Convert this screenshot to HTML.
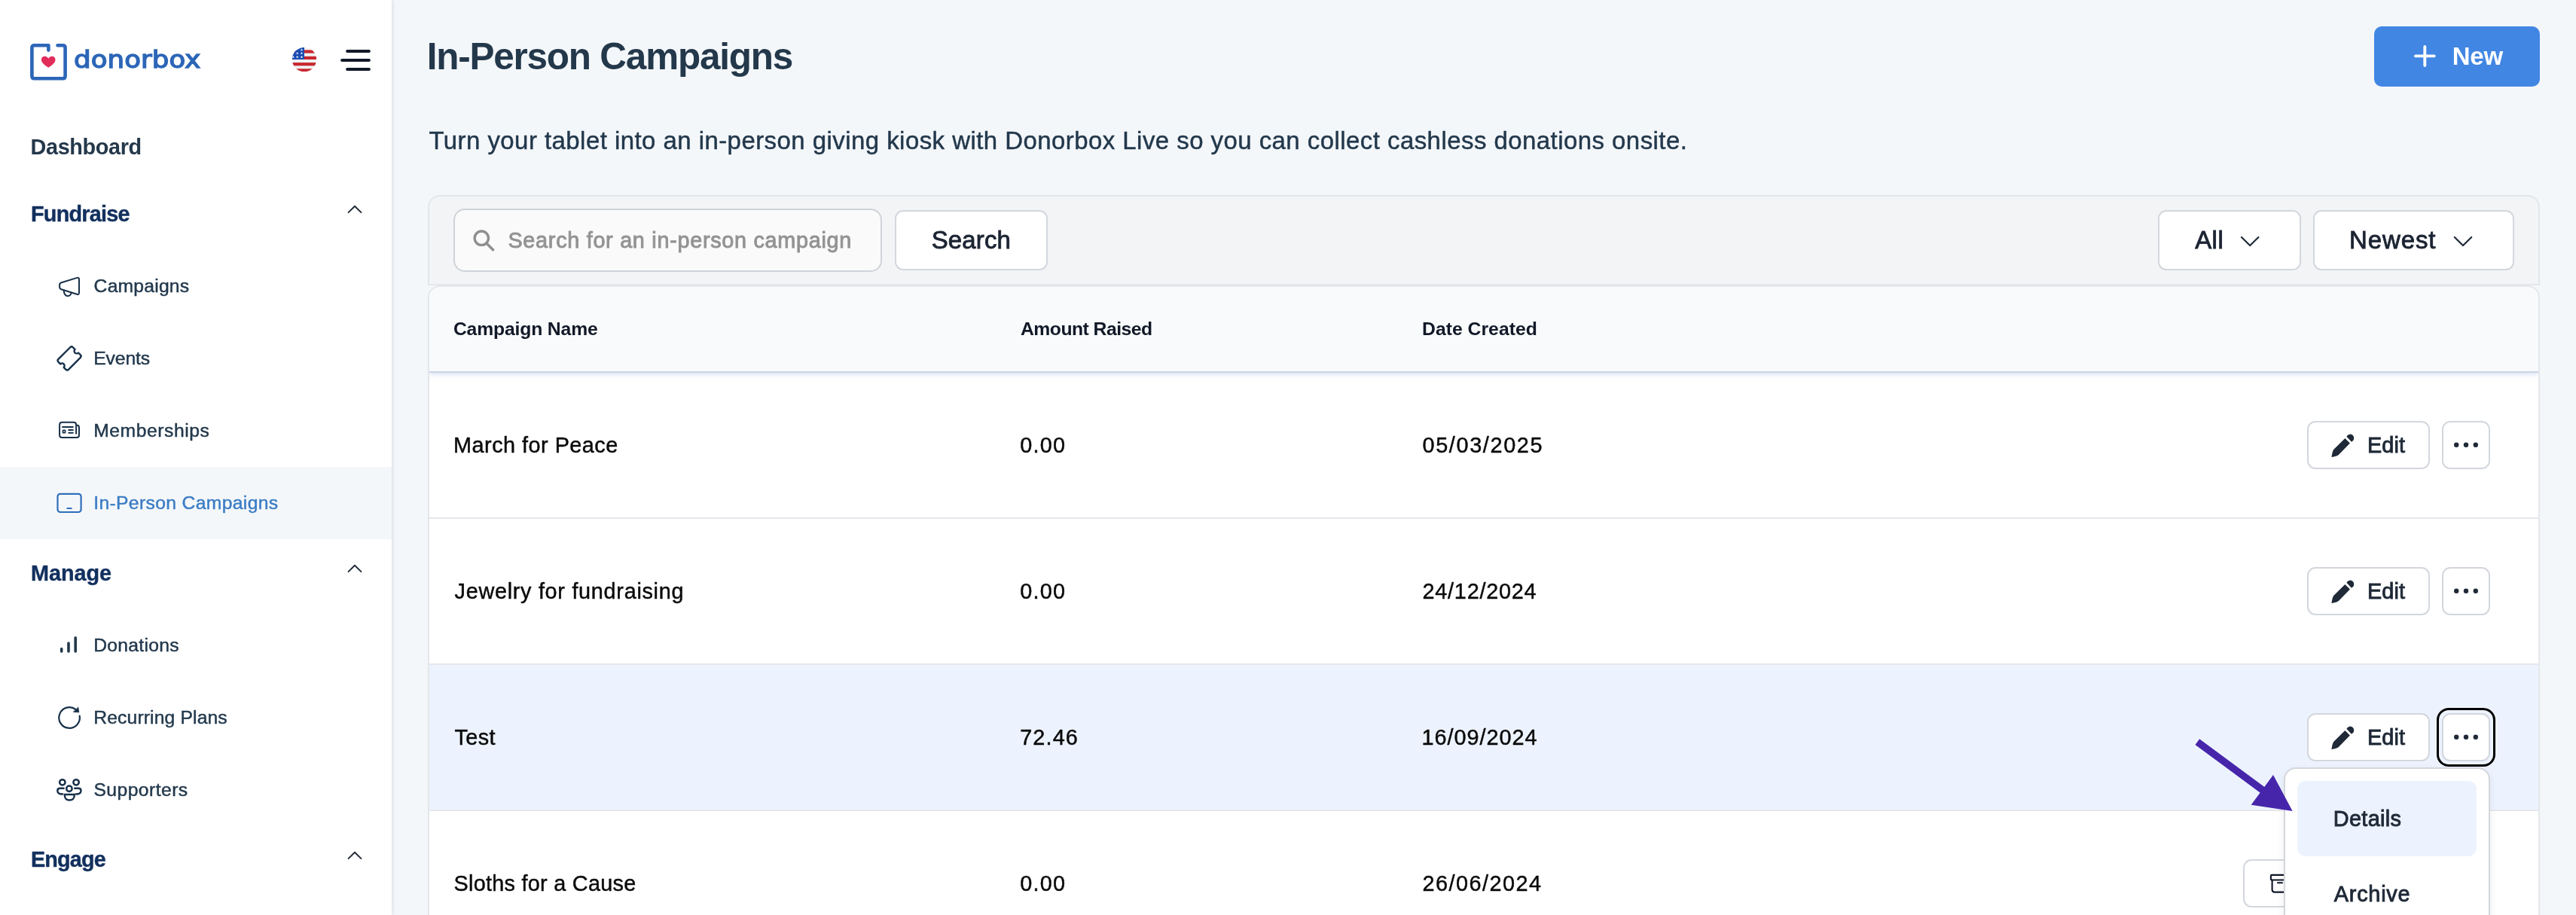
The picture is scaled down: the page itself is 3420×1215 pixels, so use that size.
<!DOCTYPE html>
<html lang="en">
<head>
<meta charset="utf-8">
<title>In-Person Campaigns</title>
<style>
*{box-sizing:border-box;margin:0;padding:0}
html,body{width:3420px;height:1215px;overflow:hidden;background:#f4f7fa;font-family:"Liberation Sans",sans-serif}
#page{position:relative;width:3420px;height:1215px;overflow:hidden;will-change:transform}
.a{position:absolute}
.t{position:absolute;white-space:nowrap;line-height:1}
#side{left:0;top:0;width:520px;height:1215px;background:#fff;box-shadow:1px 0 5px rgba(30,40,70,.13)}
#active{left:0;top:620px;width:520px;height:96px;background:#f4f7fa}
#panel{left:568px;top:259px;width:2804px;height:120px;background:#f3f4f6;border:2px solid #e4e6ea;border-radius:16px 16px 0 0}
#card{left:568px;top:379px;width:2804px;height:900px;background:#fff;border:2px solid #e4e6ea;border-radius:16px 16px 0 0;overflow:hidden}
#thead{left:0;top:0;width:2800px;height:114px;background:#f9fafb;border-bottom:2px solid #c9d4e4;box-shadow:0 2px 7px rgba(110,145,200,.28)}
.rb{left:0;width:2800px;height:2px;background:#e5e7eb}
#hl{left:0;top:502px;width:2800px;height:192px;background:#edf3fe}
.btn{position:absolute;background:#fff;border:2px solid #d3d7dd;border-radius:11px}
#inp{left:602px;top:277px;width:569px;height:84px;background:#fafafa;border:2px solid #cfd3d9;border-radius:15px}
#new{left:3152px;top:35px;width:220px;height:80px;background:#4186e3;border-radius:10px}
#ring{left:3235px;top:940px;width:78px;height:78px;border:3px solid #000;border-radius:16px}
#menu{left:3032px;top:1019px;width:274px;height:260px;background:#fff;border:2px solid #d3d6db;border-radius:16px;box-shadow:0 4px 12px rgba(0,0,0,.07)}
#mi{left:3050px;top:1037px;width:238px;height:100px;background:#edf3fe;border-radius:11px}
svg{position:absolute;overflow:visible}
</style>
</head>
<body>
<div id="page">
<!-- main panels -->
<div id="panel" class="a"></div>
<div id="card" class="a">
  <div id="hl" class="a"></div>
  <div class="a rb" style="top:306px"></div>
  <div class="a rb" style="top:500px"></div>
  <div class="a rb" style="top:694px"></div>
  <div id="thead" class="a"></div>
</div>
<div id="inp" class="a"></div>
<div class="btn" style="left:1188px;top:279px;width:203px;height:80px"></div>
<div class="btn" style="left:2865px;top:279px;width:190px;height:80px"></div>
<div class="btn" style="left:3071px;top:279px;width:267px;height:80px"></div>
<div id="new" class="a"></div>
<!-- row buttons -->
<div class="btn" style="left:3063px;top:559px;width:163px;height:64px"></div>
<div class="btn" style="left:3242px;top:559px;width:64px;height:64px"></div>
<div class="btn" style="left:3063px;top:753px;width:163px;height:64px"></div>
<div class="btn" style="left:3242px;top:753px;width:64px;height:64px"></div>
<div class="btn" style="left:3063px;top:947px;width:163px;height:64px"></div>
<div class="btn" style="left:3242px;top:947px;width:64px;height:64px"></div>
<div class="btn" style="left:2978px;top:1141px;width:200px;height:64px"></div>
<div id="ring" class="a"></div>
<!-- sidebar -->
<div id="side" class="a"></div>
<div id="active" class="a"></div>
<svg class="a" style="left:0;top:0" width="3420" height="1215" viewBox="0 0 3420 1215" fill="none" stroke-linecap="round" stroke-linejoin="round">
<!-- logo -->
<path d="M64.4 66.6V60.2H45.6Q42.4 60.2 42.4 63.4V101Q42.4 104.2 45.6 104.2H83.4Q86.6 104.2 86.6 101V63.4Q86.6 60.2 83.4 60.2H76.5" stroke="#2c66b8" stroke-width="4.6"/>
<path d="M64.3 89.7C58 86 54.9 82.5 54.9 79.3C54.9 76.5 57 74.8 59.4 74.8C61.5 74.8 63 76 64.3 77.6C65.6 76 67.1 74.8 69.2 74.8C71.6 74.8 73.5 76.5 73.5 79.3C73.5 82.5 70.6 86 64.3 89.7Z" fill="#e12d5a"/>
<!-- flag -->
<defs><clipPath id="fc"><circle cx="404" cy="79" r="16.1"/></clipPath></defs>
<g clip-path="url(#fc)">
<rect x="387" y="62" width="34" height="34" fill="#f0f1f1"/>
<rect x="387" y="66.4" width="34" height="4.2" fill="#c8262f"/>
<rect x="387" y="74.8" width="34" height="4.2" fill="#c8262f"/>
<rect x="387" y="83.1" width="34" height="4.2" fill="#c8262f"/>
<rect x="387" y="91.3" width="34" height="4.2" fill="#c8262f"/>
<rect x="387" y="62" width="17" height="17" fill="#1d4db3"/>
<g fill="#f3f4f6">
<polygon points="400.50,64.40 400.97,65.65 402.31,65.71 401.26,66.55 401.62,67.84 400.50,67.10 399.38,67.84 399.74,66.55 398.69,65.71 400.03,65.65"/><polygon points="394.70,68.90 395.17,70.15 396.51,70.21 395.46,71.05 395.82,72.34 394.70,71.60 393.58,72.34 393.94,71.05 392.89,70.21 394.23,70.15"/><polygon points="400.50,68.90 400.97,70.15 402.31,70.21 401.26,71.05 401.62,72.34 400.50,71.60 399.38,72.34 399.74,71.05 398.69,70.21 400.03,70.15"/>
<polygon points="394.70,73.70 395.17,74.95 396.51,75.01 395.46,75.85 395.82,77.14 394.70,76.40 393.58,77.14 393.94,75.85 392.89,75.01 394.23,74.95"/><polygon points="400.50,73.70 400.97,74.95 402.31,75.01 401.26,75.85 401.62,77.14 400.50,76.40 399.38,77.14 399.74,75.85 398.69,75.01 400.03,74.95"/><polygon points="389.20,73.70 389.67,74.95 391.01,75.01 389.96,75.85 390.32,77.14 389.20,76.40 388.08,77.14 388.44,75.85 387.39,75.01 388.73,74.95"/>
</g>
</g>
<!-- hamburger -->
<g stroke="#111827" stroke-width="4"><path d="M461.1 68H489.9"/><path d="M454.1 80H489.9"/><path d="M461.1 92H489.9"/></g>
<!-- chevrons up -->
<g stroke="#1f2937" stroke-width="1.9" stroke-linecap="butt"><path d="M462 282.6L471 273.8L480 282.6"/><path d="M462 759.6L471 750.8L480 759.6"/><path d="M462 1140.6L471 1131.8L480 1140.6"/></g>
<!-- megaphone -->
<g stroke="#17304a" stroke-width="2" transform="translate(66 350)">
<path d="M15.5 25.3L36.3 18.9Q39 18.2 39 21V38.8Q39 41.5 36.3 40.8L15.5 34.2Q13.1 33.4 13.1 31V28.4Q13.1 26.1 15.5 25.3Z"/>
<path d="M18.7 35.4C18.7 40 21 43 23.6 43C26 43 28 41.5 28.9 38.7"/>
</g>
<!-- ticket -->
<g stroke="#17304a" stroke-width="2.4" transform="translate(92.1 475.9) rotate(-45)">
<path d="M-11.1 -9.6H11.1Q13.7 -9.6 13.7 -7V-3.2A3.2 3.2 0 0 0 13.7 3.2V7Q13.7 9.6 11.1 9.6H-11.1Q-13.7 9.6 -13.7 7V3.2A3.2 3.2 0 0 0 -13.7 -3.2V-7Q-13.7 -9.6 -11.1 -9.6Z"/>
</g>
<!-- memberships -->
<g stroke="#17304a" stroke-width="2" transform="translate(66 542)">
<path d="M35.1 33.8V22Q35.1 18.7 31.8 18.7H16.4Q13.1 18.7 13.1 22V35.7Q13.1 39 16.4 39H35.7Q39 39 39 35.7V25.9Q39 22.6 35.7 22.6H35.1"/>
<path d="M17 24.9H30.8M25.2 28.9H30.8M25.2 32.8H30.8"/>
<rect x="17.5" y="29.3" width="3.1" height="3.4" rx="0.5" stroke-width="1.7"/>
</g>
<!-- tablet (active) -->
<g stroke="#2f6fba" stroke-width="2.2" transform="translate(66 638)">
<rect x="10.5" y="17.8" width="31.1" height="24.2" rx="3.4"/>
<path d="M23.4 37H28.7"/>
</g>
<!-- bars -->
<g stroke="#24384b" stroke-width="3.6" transform="translate(66 826)">
<path d="M15.7 35.6V38.9M25 28V38.9M34.2 20.8V38.9"/>
</g>
<!-- recurring -->
<g transform="translate(66 922)">
<path d="M39.7 28.6A13.8 13.8 0 1 1 34.6 20.1" stroke="#17304a" stroke-width="2.2"/>
<path d="M37.9 17.2L38.9 23.9L31.3 23.4Z" fill="#17304a" stroke="#17304a" stroke-width="0.6"/>
</g>
<!-- supporters -->
<g stroke="#17304a" stroke-width="2.45" transform="translate(66 1018)">
<circle cx="16.85" cy="20.85" r="3.7"/><circle cx="35.1" cy="20.85" r="3.7"/><circle cx="25.9" cy="29.2" r="3.7"/>
<path d="M19.9 37H32.7V38.6C32.7 42.4 30 44.5 26.3 44.5C22.6 44.5 19.9 42.4 19.9 38.6Z"/>
<path d="M18.6 28.8H13.6Q10.3 28.8 10.3 32C10.3 35 13 36.9 17.3 36.4"/>
<path d="M33.2 28.8H38.2Q41.5 28.8 41.5 32C41.5 35 38.8 36.9 34.5 36.4"/>
</g>
<!-- search icon -->
<g stroke="#8f8f8f" stroke-width="3.4" stroke-linecap="butt">
<circle cx="639.3" cy="316.2" r="9.2"/><path d="M645.8 323L654.4 331.6" stroke-linecap="square"/>
</g>
<!-- plus -->
<g stroke="#fff" stroke-width="3.9"><path d="M3219.3 62V87M3207 74.4H3231.7"/></g>
<!-- chevrons down -->
<g stroke="#1f2937" stroke-width="2.2"><path d="M2976 315L2987.2 326L2998.4 315"/><path d="M3258.8 315L3270 326L3281.2 315"/></g>
<!-- pencils + dots -->
<g>
<g fill="#1f2937">
<path d="M3113.35 582.1L3119.9 588.6L3104.8 603.9Q3103 605.3 3100.2 605.9L3095.9 607Q3095.3 607 3095.5 606.3L3096.4 601.7Q3096.9 598.9 3098.4 596.8Z"/>
<path d="M3115.4 579.7L3121.9 586.7A5.2 5.2 0 1 0 3115.4 579.7Z"/>
<circle cx="3261.2" cy="590.8" r="3.2"/><circle cx="3274" cy="590.8" r="3.2"/><circle cx="3286.8" cy="590.8" r="3.2"/>
</g>
</g>
<g transform="translate(0 194)">
<g fill="#1f2937">
<path d="M3113.35 582.1L3119.9 588.6L3104.8 603.9Q3103 605.3 3100.2 605.9L3095.9 607Q3095.3 607 3095.5 606.3L3096.4 601.7Q3096.9 598.9 3098.4 596.8Z"/>
<path d="M3115.4 579.7L3121.9 586.7A5.2 5.2 0 1 0 3115.4 579.7Z"/>
<circle cx="3261.2" cy="590.8" r="3.2"/><circle cx="3274" cy="590.8" r="3.2"/><circle cx="3286.8" cy="590.8" r="3.2"/>
</g>
</g>
<g transform="translate(0 388)">
<g fill="#1f2937">
<path d="M3113.35 582.1L3119.9 588.6L3104.8 603.9Q3103 605.3 3100.2 605.9L3095.9 607Q3095.3 607 3095.5 606.3L3096.4 601.7Q3096.9 598.9 3098.4 596.8Z"/>
<path d="M3115.4 579.7L3121.9 586.7A5.2 5.2 0 1 0 3115.4 579.7Z"/>
<circle cx="3261.2" cy="590.8" r="3.2"/><circle cx="3274" cy="590.8" r="3.2"/><circle cx="3286.8" cy="590.8" r="3.2"/>
</g>
</g>
<!-- archive icon row 4 -->
<g stroke="#111827" stroke-width="2.1">
<rect x="3014.9" y="1161.9" width="27" height="6.6" rx="1"/>
<path d="M3016.6 1168.6V1181.2Q3016.6 1184.6 3020 1184.6H3036.4Q3039.8 1184.6 3039.8 1181.2V1168.6M3024 1172.2H3030"/>
</g>
</svg>

<div id="menu" class="a"></div>
<div id="mi" class="a"></div>
<svg class="a" style="left:0;top:0" width="3420" height="1215" viewBox="0 0 3420 1215">
<path d="M2917.3 985.1L3006 1050.6" stroke="#4725ab" stroke-width="9.5" fill="none"/>
<path d="M2988.7 1068.7L3018 1029.1L3043.6 1077.1Z" fill="#4725ab"/>
</svg>

<span class="t" style="left:97.56px;top:64.34px;font-size:31.5px;font-weight:400;color:#2c66b8;letter-spacing:0.087px;-webkit-text-stroke:1.4px currentColor;font-family:'DejaVu Sans',sans-serif;transform:scaleX(1.13);transform-origin:0 0;">donorbox</span>
<span class="t" style="left:40.50px;top:180.59px;font-size:28.84px;font-weight:700;color:#24384b;letter-spacing:-0.358px;">Dashboard</span>
<span class="t" style="left:41.00px;top:269.59px;font-size:28.84px;font-weight:700;color:#12305e;letter-spacing:-0.791px;-webkit-text-stroke:0.4px currentColor;">Fundraise</span>
<span class="t" style="left:41.00px;top:746.59px;font-size:28.84px;font-weight:700;color:#12305e;letter-spacing:-0.040px;-webkit-text-stroke:0.4px currentColor;">Manage</span>
<span class="t" style="left:41.00px;top:1126.59px;font-size:28.84px;font-weight:700;color:#12305e;letter-spacing:-0.858px;-webkit-text-stroke:0.4px currentColor;">Engage</span>
<span class="t" style="left:124.62px;top:368.07px;font-size:24.72px;font-weight:400;color:#22384c;letter-spacing:0.185px;-webkit-text-stroke:0.45px currentColor;">Campaigns</span>
<span class="t" style="left:124.22px;top:464.07px;font-size:24.72px;font-weight:400;color:#22384c;letter-spacing:-0.132px;-webkit-text-stroke:0.45px currentColor;">Events</span>
<span class="t" style="left:124.22px;top:560.07px;font-size:24.72px;font-weight:400;color:#22384c;letter-spacing:0.525px;-webkit-text-stroke:0.45px currentColor;">Memberships</span>
<span class="t" style="left:124.22px;top:656.07px;font-size:24.72px;font-weight:400;color:#3b7cc4;letter-spacing:0.325px;-webkit-text-stroke:0.45px currentColor;">In-Person Campaigns</span>
<span class="t" style="left:124.22px;top:845.07px;font-size:24.72px;font-weight:400;color:#22384c;letter-spacing:0.250px;-webkit-text-stroke:0.45px currentColor;">Donations</span>
<span class="t" style="left:124.22px;top:941.07px;font-size:24.72px;font-weight:400;color:#22384c;letter-spacing:0.118px;-webkit-text-stroke:0.45px currentColor;">Recurring Plans</span>
<span class="t" style="left:124.42px;top:1037.07px;font-size:24.72px;font-weight:400;color:#22384c;letter-spacing:0.433px;-webkit-text-stroke:0.45px currentColor;">Supporters</span>
<span class="t" style="left:566.70px;top:50.15px;font-size:49.44px;font-weight:700;color:#24384b;letter-spacing:-1.206px;">In-Person Campaigns</span>
<span class="t" style="left:569.43px;top:171.10px;font-size:32.96px;font-weight:400;color:#22384c;letter-spacing:0.456px;-webkit-text-stroke:0.45px currentColor;">Turn your tablet into an in-person giving kiosk with Donorbox Live so you can collect cashless donations onsite.</span>
<span class="t" style="left:674.45px;top:304.59px;font-size:28.84px;font-weight:400;color:#939393;letter-spacing:0.699px;-webkit-text-stroke:0.9px currentColor;">Search for an in-person campaign</span>
<span class="t" style="left:1236.65px;top:303.10px;font-size:32.96px;font-weight:400;color:#1c2433;letter-spacing:0.163px;-webkit-text-stroke:0.9px currentColor;">Search</span>
<span class="t" style="left:2914.15px;top:303.10px;font-size:32.96px;font-weight:400;color:#1c2433;letter-spacing:0.500px;-webkit-text-stroke:0.9px currentColor;">All</span>
<span class="t" style="left:3118.95px;top:303.10px;font-size:32.96px;font-weight:400;color:#1c2433;letter-spacing:0.935px;-webkit-text-stroke:0.9px currentColor;">Newest</span>
<span class="t" style="left:3255.70px;top:59.10px;font-size:32.96px;font-weight:700;color:#ffffff;letter-spacing:-0.212px;">New</span>
<span class="t" style="left:601.90px;top:425.07px;font-size:24.72px;font-weight:700;color:#111827;letter-spacing:-0.153px;">Campaign Name</span>
<span class="t" style="left:1355.00px;top:425.07px;font-size:24.72px;font-weight:700;color:#111827;letter-spacing:-0.516px;">Amount Raised</span>
<span class="t" style="left:1888.00px;top:425.07px;font-size:24.72px;font-weight:700;color:#111827;letter-spacing:0.028px;">Date Created</span>
<span class="t" style="left:602.12px;top:576.59px;font-size:28.84px;font-weight:400;color:#0a0a0a;letter-spacing:0.478px;-webkit-text-stroke:0.45px currentColor;">March for Peace</span>
<span class="t" style="left:1354.22px;top:576.59px;font-size:28.84px;font-weight:400;color:#0a0a0a;letter-spacing:1.258px;-webkit-text-stroke:0.45px currentColor;">0.00</span>
<span class="t" style="left:1888.52px;top:576.59px;font-size:28.84px;font-weight:400;color:#0a0a0a;letter-spacing:1.633px;-webkit-text-stroke:0.45px currentColor;">05/03/2025</span>
<span class="t" style="left:603.52px;top:770.59px;font-size:28.84px;font-weight:400;color:#0a0a0a;letter-spacing:0.708px;-webkit-text-stroke:0.45px currentColor;">Jewelry for fundraising</span>
<span class="t" style="left:1354.22px;top:770.59px;font-size:28.84px;font-weight:400;color:#0a0a0a;letter-spacing:1.258px;-webkit-text-stroke:0.45px currentColor;">0.00</span>
<span class="t" style="left:1888.52px;top:770.59px;font-size:28.84px;font-weight:400;color:#0a0a0a;letter-spacing:0.756px;-webkit-text-stroke:0.45px currentColor;">24/12/2024</span>
<span class="t" style="left:603.52px;top:964.59px;font-size:28.84px;font-weight:400;color:#0a0a0a;letter-spacing:0.397px;-webkit-text-stroke:0.45px currentColor;">Test</span>
<span class="t" style="left:1354.22px;top:964.59px;font-size:28.84px;font-weight:400;color:#0a0a0a;letter-spacing:1.111px;-webkit-text-stroke:0.45px currentColor;">72.46</span>
<span class="t" style="left:1887.52px;top:964.59px;font-size:28.84px;font-weight:400;color:#0a0a0a;letter-spacing:0.967px;-webkit-text-stroke:0.45px currentColor;">16/09/2024</span>
<span class="t" style="left:602.52px;top:1158.59px;font-size:28.84px;font-weight:400;color:#0a0a0a;letter-spacing:0.266px;-webkit-text-stroke:0.45px currentColor;">Sloths for a Cause</span>
<span class="t" style="left:1354.22px;top:1158.59px;font-size:28.84px;font-weight:400;color:#0a0a0a;letter-spacing:1.258px;-webkit-text-stroke:0.45px currentColor;">0.00</span>
<span class="t" style="left:1888.52px;top:1158.59px;font-size:28.84px;font-weight:400;color:#0a0a0a;letter-spacing:1.478px;-webkit-text-stroke:0.45px currentColor;">26/06/2024</span>
<span class="t" style="left:3143.05px;top:576.59px;font-size:28.84px;font-weight:400;color:#1f2937;letter-spacing:0.078px;-webkit-text-stroke:0.9px currentColor;">Edit</span>
<span class="t" style="left:3143.05px;top:770.59px;font-size:28.84px;font-weight:400;color:#1f2937;letter-spacing:0.078px;-webkit-text-stroke:0.9px currentColor;">Edit</span>
<span class="t" style="left:3143.05px;top:964.59px;font-size:28.84px;font-weight:400;color:#1f2937;letter-spacing:0.078px;-webkit-text-stroke:0.9px currentColor;">Edit</span>
<span class="t" style="left:3097.75px;top:1072.59px;font-size:28.84px;font-weight:400;color:#1f2937;letter-spacing:0.349px;-webkit-text-stroke:0.9px currentColor;">Details</span>
<span class="t" style="left:3098.75px;top:1172.59px;font-size:28.84px;font-weight:400;color:#1f2937;letter-spacing:0.784px;-webkit-text-stroke:0.9px currentColor;">Archive</span>
</div>
</body>
</html>
